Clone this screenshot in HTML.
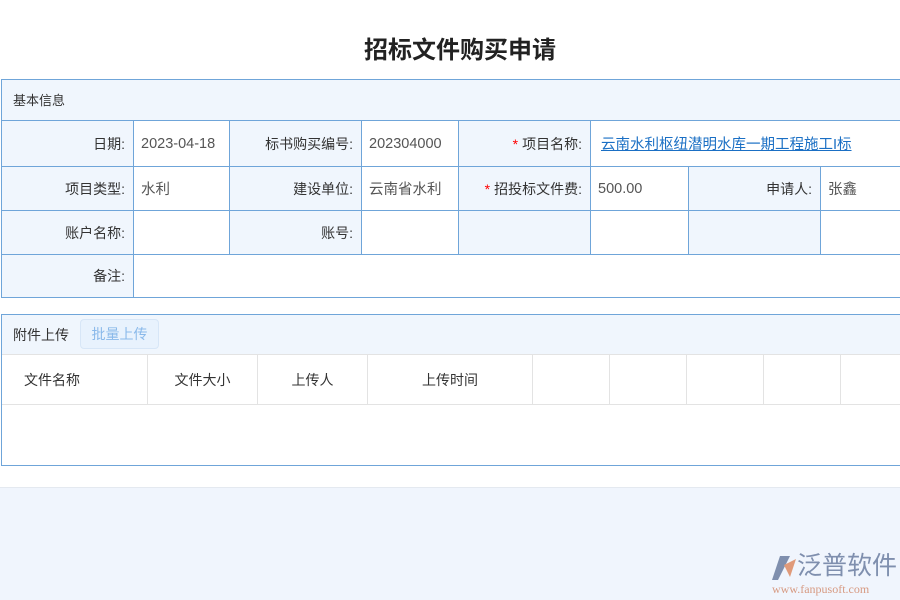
<!DOCTYPE html>
<html><head><meta charset="utf-8"><style>
*{margin:0;padding:0;box-sizing:border-box}
body{width:900px;height:600px;overflow:hidden;background:#f0f5fd;font-family:"Liberation Sans","Noto Sans CJK SC",sans-serif;font-size:14px;color:#333;position:relative}
.top{position:absolute;left:0;top:0;width:900px;height:488px;background:#fff;border-bottom:1px solid #e4e9f0}
.abs{position:absolute}
.t{position:absolute;left:0;width:920px;top:30px;text-align:center;font-size:24px;font-weight:bold;color:#222}
.c{position:absolute;border-left:1px solid #6fa5d9;border-top:1px solid #6fa5d9;display:flex;align-items:center;font-size:14px}
.l{background:#f0f6fd;justify-content:flex-end;padding-right:8px;color:#333}
.v{background:#fff;padding-left:7px;color:#555;font-size:14.5px}
.s{color:#f00;margin-right:4px}
.g{position:absolute;border-left:1px solid #e3e3e3;top:355px;height:49px;display:flex;align-items:center;justify-content:center;color:#333}
</style></head><body>
<div class="top"></div>
<div class="t">招标文件购买申请</div>
<div class="abs" style="left:1px;top:79px;width:899px;height:219px;border:1px solid #6fa5d9;border-right:none;background:#f0f6fd"></div>
<div class="abs" style="left:13px;top:90px;font-size:13px;color:#333">基本信息</div>
<div class="c l" style="left:1px;top:120px;width:132px;height:46px">日期:</div>
<div class="c v" style="left:133px;top:120px;width:96px;height:46px">2023-04-18</div>
<div class="c l" style="left:229px;top:120px;width:132px;height:46px">标书购买编号:</div>
<div class="c v" style="left:361px;top:120px;width:97px;height:46px">202304000</div>
<div class="c l" style="left:458px;top:120px;width:132px;height:46px"><span class="s">*</span>项目名称:</div>
<div class="c v" style="left:590px;top:120px;width:310px;height:46px;padding-left:10px"><span style="color:#1a6fc4;text-decoration:underline">云南水利枢纽潜明水库一期工程施工I标</span></div>
<div class="c l" style="left:1px;top:166px;width:132px;height:44px">项目类型:</div>
<div class="c v" style="left:133px;top:166px;width:96px;height:44px">水利</div>
<div class="c l" style="left:229px;top:166px;width:132px;height:44px">建设单位:</div>
<div class="c v" style="left:361px;top:166px;width:97px;height:44px">云南省水利</div>
<div class="c l" style="left:458px;top:166px;width:132px;height:44px"><span class="s">*</span>招投标文件费:</div>
<div class="c v" style="left:590px;top:166px;width:98px;height:44px">500.00</div>
<div class="c l" style="left:688px;top:166px;width:132px;height:44px">申请人:</div>
<div class="c v" style="left:820px;top:166px;width:80px;height:44px">张鑫</div>
<div class="c l" style="left:1px;top:210px;width:132px;height:44px">账户名称:</div>
<div class="c v" style="left:133px;top:210px;width:96px;height:44px"></div>
<div class="c l" style="left:229px;top:210px;width:132px;height:44px">账号:</div>
<div class="c v" style="left:361px;top:210px;width:97px;height:44px"></div>
<div class="c l" style="left:458px;top:210px;width:132px;height:44px"></div>
<div class="c v" style="left:590px;top:210px;width:98px;height:44px"></div>
<div class="c l" style="left:688px;top:210px;width:132px;height:44px"></div>
<div class="c v" style="left:820px;top:210px;width:80px;height:44px"></div>
<div class="c l" style="left:1px;top:254px;width:132px;height:43px">备注:</div>
<div class="c v" style="left:133px;top:254px;width:767px;height:43px"></div>
<div class="abs" style="left:1px;top:314px;width:899px;height:152px;border:1px solid #6fa5d9;border-right:none;background:#fff"></div>
<div class="abs" style="left:2px;top:315px;width:898px;height:40px;background:#f0f6fd;border-bottom:1px solid #e3e3e3"></div>
<div class="abs" style="left:13px;top:325px;font-size:14px;color:#333">附件上传</div>
<div class="abs" style="left:80px;top:319px;width:79px;height:30px;border:1px solid #d7e6f7;border-radius:4px;background:#e8f2fd;color:#8ab9ea;display:flex;align-items:center;justify-content:center">批量上传</div>
<div class="g" style="left:2px;width:145px;border-left:none;justify-content:flex-start;padding-left:22px">文件名称</div>
<div class="g" style="left:147px;width:110px">文件大小</div>
<div class="g" style="left:257px;width:110px">上传人</div>
<div class="g" style="left:367px;width:165px">上传时间</div>
<div class="g" style="left:532px;width:77px"></div>
<div class="g" style="left:609px;width:77px"></div>
<div class="g" style="left:686px;width:77px"></div>
<div class="g" style="left:763px;width:77px"></div>
<div class="g" style="left:840px;width:60px"></div>
<div class="abs" style="left:2px;top:404px;width:898px;height:1px;background:#e3e3e3"></div>
<svg class="abs" style="left:770px;top:555px" width="28" height="26" viewBox="0 0 28 26"><path d="M10 1 L20 1 L8 25 L2 25 Z" fill="#7f8fae"/><path d="M14 10 L26 4 L20 22 Z" fill="#e09a7a"/></svg>
<div class="abs" style="left:797px;top:551px;font-size:25px;line-height:30px;color:#7f8fae">泛普软件</div>
<div class="abs" style="left:772px;top:582px;font-size:12px;color:#d79a82;font-family:'Liberation Serif',serif">www.fanpusoft.com</div>
</body></html>
